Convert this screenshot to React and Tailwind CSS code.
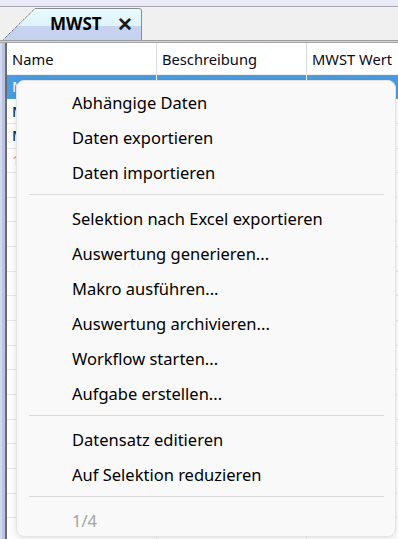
import React from "react";

const items1 = ["Abhängige Daten", "Daten exportieren", "Daten importieren"];
const items2 = [
  "Selektion nach Excel exportieren",
  "Auswertung generieren...",
  "Makro ausführen...",
  "Auswertung archivieren...",
  "Workflow starten...",
  "Aufgabe erstellen...",
];
const items3 = ["Datensatz editieren", "Auf Selektion reduzieren"];

function Item({ children, disabled }) {
  return (
    <div
      className={
        "h-[35px] flex items-center pl-[55px] pt-[3px] text-[16.5px] " +
        (disabled ? "text-[#a3a3a3]" : "text-black")
      }
    >
      {children}
    </div>
  );
}

function Sep() {
  return (
    <div className="h-[11px] flex items-center pl-[12px] pr-[11px]">
      <div className="h-px w-full bg-[#d9d9d9]" />
    </div>
  );
}

export default function App() {
  const rows = Array.from({ length: 19 });
  return (
    <div
      className="relative w-[398px] h-[539px] overflow-hidden bg-[#f0f0f0]"
      style={{ fontFamily: '"Segoe UI", "Noto Sans", sans-serif' }}
    >
      {/* top strip */}
      <div className="h-[7px] bg-[#e9e9f7] border-b border-[#a8a8b0]" />
      {/* tab bar */}
      <div className="relative h-[33px] flex">
        <div className="w-[3px] h-full bg-[#f0f0f0]" />
        <div className="relative w-[140px] h-full">
          <svg
            className="absolute inset-0"
            width="140"
            height="33"
            viewBox="0 0 140 33"
          >
            <defs>
              <linearGradient id="tabg" x1="0" y1="0" x2="0" y2="1">
                <stop offset="0" stopColor="#e6fcff" />
                <stop offset="0.55" stopColor="#e0f3fb" />
                <stop offset="0.56" stopColor="#c6d4f1" />
                <stop offset="1" stopColor="#c4d2f0" />
              </linearGradient>
            </defs>
            <path
              d="M0 33 L32 1.5 L136 1.5 Q138.5 1.5 138.5 4 L138.5 33 Z"
              fill="url(#tabg)"
            />
            <path
              d="M0.5 32.5 L32 1.5"
              stroke="#404040"
              strokeWidth="1"
              strokeDasharray="1 1"
              fill="none"
            />
            <path
              d="M32 1.5 L136 1.5 Q138.5 1.5 138.5 4 L138.5 33"
              stroke="#8c8c8c"
              strokeWidth="1"
              fill="none"
            />
          </svg>
          <div className="absolute left-[47px] top-[8px] flex items-center gap-[15px]">
            <span className="text-[17px] font-bold text-black leading-[18px]">
              MWST
            </span>
            <span className="text-[19px] font-bold text-[#1a1a1a] leading-[18px]">
              ✕
            </span>
          </div>
        </div>
      </div>
      {/* separator lines under tab */}
      <div className="h-px bg-[#9c9c9c]" />
      <div className="h-px bg-[#d4d4d4]" />
      <div className="h-px bg-[#a4a4a4]" />
      {/* grid */}
      <div className="flex h-[500px]">
        <div className="w-[2px] bg-[#d6daee]" />
        <div className="w-[3px] bg-[#bcc4e4]" />
        <div className="w-[2px] bg-[#6c6c6c]" />
        <div className="flex-1 bg-white flex flex-col">
          <div className="h-[32px] flex text-[14.7px] text-[#0a0a1a] border-b border-[#f0f0f0]">
            <div className="w-[150px] pl-[5px] pt-[2px] flex items-center border-r border-[#dcdcdc]">
              Name
            </div>
            <div className="w-[150px] pl-[5px] pt-[2px] flex items-center border-r border-[#dcdcdc]">
              Beschreibung
            </div>
            <div className="flex-1 pl-[5px] pt-[2px] flex items-center">MWST Wert</div>
          </div>
          {rows.map((_, i) => (
            <div
              key={i}
              className={
                "h-[25px] flex text-[15px] border-b " +
                (i === 0
                  ? "bg-[#4a9de2] border-[#4a9de2] text-white"
                  : "border-[#e8e8e8] text-[#0a0a1a]")
              }
            >
              <div
                className={
                  "w-[150px] pl-[5px] flex items-center border-r " +
                  (i === 0 ? "border-white" : "border-[#ececec]") +
                  (i === 3 ? " text-[#f0a040]" : "")
                }
              >
                {i === 0 || i === 1 || i === 2 ? "M" : i === 3 ? "1" : ""}
              </div>
              <div
                className={
                  "w-[150px] border-r " +
                  (i === 0 ? "border-white" : "border-[#ececec]")
                }
              />
              <div className="flex-1" />
            </div>
          ))}
        </div>
      </div>
      {/* context menu */}
      <div className="absolute left-[16px] top-[80px] w-[380px] h-[457px] rounded-[8px] bg-[#f9f9f9] border border-[#e3e3e3] shadow-[0_2px_8px_rgba(0,0,0,0.12)] pt-[3px] overflow-hidden">
        {items1.map((t) => (
          <Item key={t}>{t}</Item>
        ))}
        <Sep />
        {items2.map((t) => (
          <Item key={t}>{t}</Item>
        ))}
        <Sep />
        {items3.map((t) => (
          <Item key={t}>{t}</Item>
        ))}
        <Sep />
        <Item disabled>1/4</Item>
      </div>
    </div>
  );
}
